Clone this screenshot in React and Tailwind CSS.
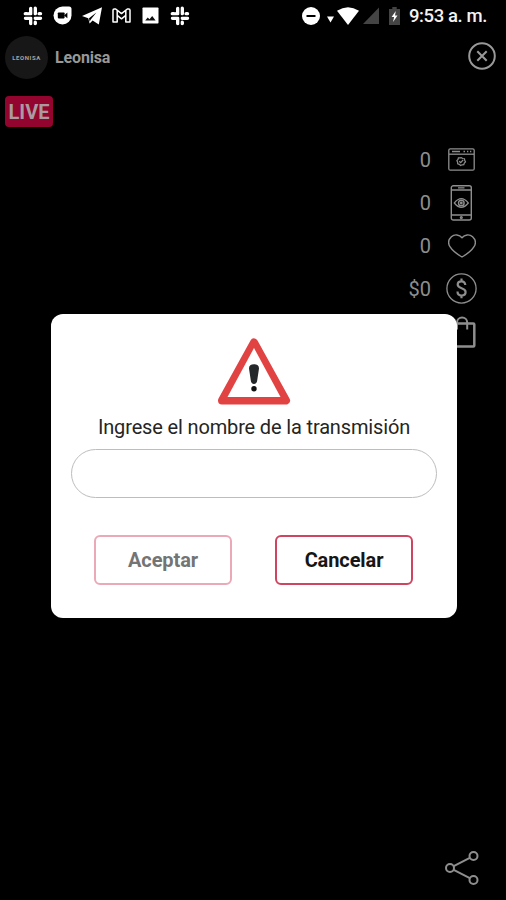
import React from "react";

const SlackIcon = () => (
  <svg className="size-5 shrink-0" viewBox="0 0 20 20" fill="none" stroke="#fff" strokeWidth="3.6" strokeLinecap="round">
    <path d="M7.8 2.6v5.2M2.4 7.8h1.6M6 7.8h1.8M12.2 2.4v5.4M16.2 7.8h1.2M12.2 12.2h5.2M12.2 16.4v1M7.8 12.2v5.2M2.6 12.2h5.2" />
    <path d="M10 0v20M0 10h20" stroke="#000" strokeWidth="0.9" strokeLinecap="butt" />
    <path d="M0 5.4h5.4M14.6 14.6H20M5.4 14.6V20M14.6 0v5.4" stroke="#000" strokeWidth="0.8" strokeLinecap="butt" />
  </svg>
);

const DuoIcon = () => (
  <svg className="size-[19px] shrink-0" viewBox="0 0 19 19">
    <path d="M9.5.5H16A2.5 2.5 0 0 1 18.5 3v6.5a9 9 0 1 1-9-9Z" fill="#fff" />
    <rect x="4.8" y="6.4" width="6.8" height="6" rx=".8" fill="#000" />
    <path d="m11 9.4 3.4-2.8v5.6Z" fill="#000" />
  </svg>
);

const TelegramIcon = () => (
  <svg className="h-[18px] w-5 shrink-0" viewBox="0 0 20 18">
    <path d="M20 .2 16.8 17.5l-6.2-4.1-3 3.2-1.3-5.4L0 9.1Z" fill="#fff" />
    <path d="m7 11.2 7.4-5.6-5.6 6.8-1.2 2.4Z" fill="#000" />
  </svg>
);

const GmailIcon = () => (
  <svg className="h-[15px] w-[19px] shrink-0" viewBox="0 0 19 15" fill="none" stroke="#fff" strokeWidth="1.5" strokeLinejoin="round">
    <path d="M1 2.2Q1 1 2.2 1h1.5l5.8 4.6L15.3 1h1.5Q18 1 18 2.2V14h-4.2V7.4L9.5 10.8 5.2 7.4V14H1ZM5.2 7.4V2.3M13.8 7.4V2.3" />
  </svg>
);

const ImageIcon = () => (
  <svg className="size-[17px] shrink-0" viewBox="0 0 17 17">
    <rect x=".5" y=".5" width="16" height="16" rx=".8" fill="#fff" />
    <path d="m3.2 13.4 2.5-3 1.8 1.8 2.7-3.2 3.4 4.4Z" fill="#111" />
  </svg>
);

const StatusBar = () => (
  <header className="flex h-[31px] items-center justify-between pl-[23px] pr-[19px]">
    <div className="flex items-center gap-[10px]">
      <SlackIcon />
      <DuoIcon />
      <TelegramIcon />
      <GmailIcon />
      <div className="flex w-[19px] justify-center"><ImageIcon /></div>
      <SlackIcon />
    </div>
    <div className="flex items-center">
      <svg className="size-[18px]" viewBox="0 0 18 18">
        <circle cx="9" cy="9" r="9" fill="#fff" />
        <path d="M4.5 9h9" stroke="#000" strokeWidth="2" />
      </svg>
      <svg className="ml-[7px] mt-2 h-[7px] w-[7px]" viewBox="0 0 7 7"><path d="M0 .5h7l-3.5 6Z" fill="#fff" /></svg>
      <svg className="ml-[3px] h-[18px] w-[22px]" viewBox="0 0 22 18"><path d="M0 3.8Q11-3.4 22 3.8L11 18Z" fill="#fff" /></svg>
      <svg className="ml-1 h-[17px] w-4" viewBox="0 0 16 17"><path d="M16 .5V17H0Z" fill="#444" /></svg>
      <svg className="ml-[10px] h-[18px] w-[11px]" viewBox="0 0 11 18">
        <path d="M3.3 0h4.4v2H11v16H0V2h3.3Z" fill="#444" />
        <path d="M6.8 4 2.6 10h2.5l-1 5 4.4-6.6H6Z" fill="#fff" />
      </svg>
      <span className="ml-[9px] mt-[2px] w-[78px] whitespace-nowrap text-[18.5px] font-medium leading-none tracking-[-0.4px] text-[#f2f2f2]">9:53 a. m.</span>
    </div>
  </header>
);

const BrowserIcon = () => (
  <svg className="h-[23px] w-[27px]" viewBox="0 0 27 23" fill="none" stroke="currentColor" strokeWidth="1.3">
    <rect x=".8" y=".8" width="25.4" height="21.4" rx="1.5" />
    <path d="M1 6.2h25" />
    <path d="M4 3.5h8M15.5 3.5h1.5M19 3.5h1.3M22 3.5h1.3" />
    <path d="M13.3 9.7l1.5.8 1.7.2.2 1.7.8 1.5-1.2 1.2-.5 1.6-1.7.1-1.5.7-1.3-1.1-1.6-.5-.1-1.7-.7-1.5 1.1-1.2.4-1.6 1.7-.1Z" strokeWidth="1.2" />
    <path d="m11.2 13.3 1.5 1.3 2.5-2.7" />
  </svg>
);

const PhoneEyeIcon = () => (
  <svg className="h-9 w-[23px]" viewBox="0 0 23 36" fill="none" stroke="currentColor" strokeWidth="1.4">
    <rect x="1.3" y=".8" width="20" height="34.2" rx="2" />
    <path d="M1.3 5h20M1.3 30h20M8 2.9h6.5" />
    <circle cx="11.3" cy="32.5" r=".9" />
    <path d="M4.3 18q7-8.6 14 0-7 8.6-14 0Z" strokeWidth="1.2" />
    <circle cx="11.3" cy="18" r="2.8" />
    <circle cx="11.3" cy="18" r=".7" />
  </svg>
);

const HeartIcon = () => (
  <svg className="h-6 w-7" viewBox="0 0 28 24" fill="none" stroke="currentColor" strokeWidth="1.4" strokeLinejoin="round">
    <path d="M14 3.8C11.4.4 6.4-.1 3.4 2.8.1 5.9.2 10.1 2.3 13.2 4.4 16.5 8.8 20 14 23c5.2-3 9.6-6.5 11.7-9.8 2.1-3.1 2.2-7.3-1.1-10.4C21.6-.1 16.6.4 14 3.8Z" />
  </svg>
);

const DollarIcon = () => (
  <svg className="size-[31px]" viewBox="0 0 31 31" fill="none" stroke="currentColor">
    <circle cx="15.5" cy="15.5" r="14.6" strokeWidth="1.3" />
    <path d="M19.3 12c-.2-2.4-1.6-3.7-3.8-3.7s-3.8 1.2-3.8 3.3c0 4.7 7.9 2.7 7.9 7.5 0 2.2-1.6 3.5-4 3.5-2.5 0-4.1-1.4-4.1-4M15.5 5.6v2.7M15.5 22.6v2.7" strokeWidth="2.2" />
  </svg>
);

const BagIcon = () => (
  <svg className="h-8 w-7" viewBox="0 0 28 32" fill="none" stroke="currentColor" strokeWidth="2.5" strokeLinejoin="round">
    <rect x="1.5" y="7.5" width="24.8" height="23" rx="1" />
    <path d="M9 13.5V6.5a5 5 0 0 1 10.2 0v7" strokeWidth="2" />
  </svg>
);

const stats = [
  { value: "0", Icon: BrowserIcon },
  { value: "0", Icon: PhoneEyeIcon },
  { value: "0", Icon: HeartIcon },
  { value: "$0", Icon: DollarIcon },
  { value: "", Icon: BagIcon },
];

const StatsList = () => (
  <ul className="mt-[11px] flex flex-col pr-7">
    {stats.map(({ value, Icon }, i) => (
      <li key={i} className="flex h-[43px] items-center justify-end gap-[14px] text-[#8e8e8e]">
        <span className="text-xl leading-none">{value}</span>
        <div className="flex w-[33px] justify-center">
          <Icon />
        </div>
      </li>
    ))}
  </ul>
);

const NameDialog = () => (
  <div className="absolute left-[51px] top-[314px] flex h-[304px] w-[406px] flex-col items-center rounded-xl bg-white px-5">
    <svg className="mt-6 h-[67px] w-[74px]" viewBox="0 0 74 67">
      <path d="M37 4.5 69 62.5H5Z" fill="none" stroke="#e14343" strokeWidth="8" strokeLinejoin="round" />
      <path d="M37 10 63.5 59H10.5Z" fill="#fff" />
      <path d="M32 30.5c0-3 1.8-4.2 5-4.2s5 1.2 5 4.2l-1.8 12c-.3 2.4-1.4 3.4-3.2 3.4s-2.9-1-3.2-3.4Z" fill="#25282a" />
      <circle cx="37" cy="50.8" r="2.7" fill="#111" />
    </svg>
    <p className="mt-[10px] whitespace-nowrap text-xl leading-6 tracking-[-0.15px] text-[#252525]">Ingrese el nombre de la transmisión</p>
    <input className="mt-[10px] h-[49px] w-[366px] shrink-0 rounded-full border border-[#bdbdbd] bg-white px-5 outline-none" />
    <div className="mr-px mt-[37px] flex gap-[43px]">
      <button className="h-[50px] w-[138px] rounded-md border-2 border-[#eba9b7] text-xl font-bold tracking-[-0.1px] text-[#747474]">Aceptar</button>
      <button className="h-[50px] w-[138px] rounded-md border-2 border-[#cf4560] text-xl font-bold tracking-[-0.1px] text-[#161616]">Cancelar</button>
    </div>
  </div>
);

const App = () => {
  return (
    <main className="relative flex h-[900px] w-[506px] flex-col overflow-hidden bg-black font-[Roboto,sans-serif]">
      <StatusBar />

      {/* Channel info */}
      <div className="mt-[5px] flex h-[43px] items-center pl-[5px] pr-[10px]">
        <div className="flex size-[43px] items-center justify-center rounded-full bg-[#171717]">
          <span className="text-[6px] font-bold tracking-[0.6px] text-[#a5a5a5]">LEONISA</span>
        </div>
        <span className="ml-[7px] text-base font-bold tracking-[-0.15px] text-[#989898]">Leonisa</span>
        <svg className="mb-[3px] ml-auto size-7" viewBox="0 0 28 28" fill="none" stroke="#999" strokeWidth="2">
          <circle cx="14" cy="14" r="12.8" />
          <path d="m9.3 9.3 9.4 9.4m0-9.4-9.4 9.4" />
        </svg>
      </div>
      <span className="ml-[5px] mt-[17px] flex h-[31px] w-[48px] items-center justify-center rounded bg-[#93042e] text-xl font-bold text-[#a99ba0]">LIVE</span>

      <StatsList />

      <svg className="mb-[15px] ml-auto mr-[26px] mt-auto h-9 w-9" viewBox="0 0 36 36" fill="none" stroke="#8e8e8e" strokeWidth="2">
        <circle cx="6" cy="19" r="4" />
        <circle cx="29.5" cy="7" r="4" />
        <circle cx="29.5" cy="31" r="4" />
        <path d="m9.7 17.2 16.1-8.3M9.7 20.8l16.1 8.3" />
      </svg>

      <NameDialog />
    </main>
  );
};

export default App;
